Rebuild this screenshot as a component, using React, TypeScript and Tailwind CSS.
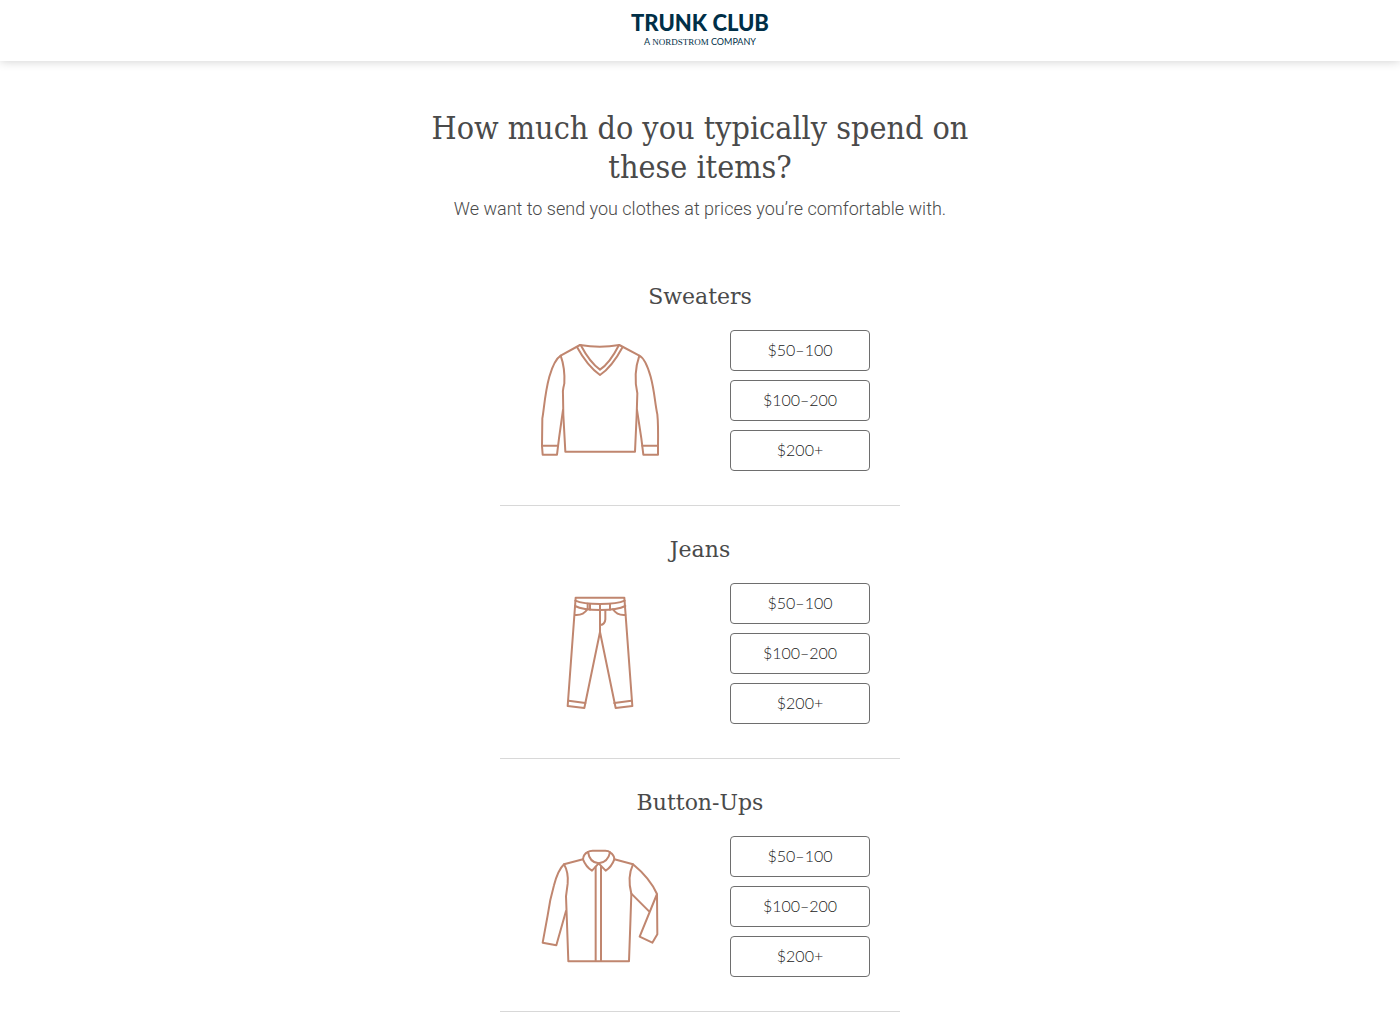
import type { ReactNode } from "react";

const PRICES = ["$50–100", "$100–200", "$200+"];

function Drawing({ label, viewBox, children }: { label: string; viewBox: string; children: ReactNode }) {
  return (
    <svg
      role="img"
      aria-label={label}
      viewBox={viewBox}
      className="h-[130px] w-[140px]"
      fill="none"
      stroke="#c0866f"
      strokeWidth="6"
      strokeLinejoin="round"
      strokeLinecap="round"
    >
      {children}
    </svg>
  );
}

function Sweater() {
  return (
    <Drawing label="Sweater" viewBox="0 3 420 390">
      <path d="M150 30Q210 40 268 30L328 62Q346 70 362 125C374 170 374 200 382 238Q385 265 384 333V359H340L334 310L321 225" />
      <path d="M150 30L92 62Q73 74 58 125C44 176 42 225 37 250L36 333L38 359H81L87 310L99 225" />
      <path d="M92 62C105 98 104 125 103 145C99 165 97 165 99 180L100 240L106 350H315L320 240L322 175C313 135 315 100 328 62" />
      <path d="M141 36Q172 93 210 120Q245 97 278 36M152 30Q180 83 210 104Q239 85 267 30" />
      <path d="M37 332H84M337 332H384" />
    </Drawing>
  );
}

function Jeans() {
  return (
    <Drawing label="Jeans" viewBox="0 3 420 390">
      <path d="M137 29H283L307 354L257 360L210 132L163 360L113 354Z" />
      <path d="M136 38Q158 48 210 48Q263 48 284 38M135 54Q158 66 210 66Q263 66 286 54" />
      <path d="M173 47V64M180 48V65M240 48V65M210 49V132M226 67V94Q225 109 211 111" />
      <path d="M172 64Q160 83 135 81M249 64Q261 83 286 81" />
      <path d="M116 338L166 345M304 338L253 345" />
    </Drawing>
  );
}

function Shirt() {
  return (
    <Drawing label="Button-up shirt" viewBox="0 5 420 390">
      <path d="M174 35Q178 31 188 31H226Q236 31 240 36Q253 44 253 57Q245 79 227 91L206 69L186 91Q168 80 159 57Q160 41 174 35Z" />
      <path d="M174 35Q179 67 206 69Q234 66 240 36" />
      <path d="M159 57L102 72Q84 89 72 135Q59 180 53 225L38 307L79 315L108 212" />
      <path d="M102 72Q116 96 113 130L108 168L111 250L115 363H297L301 250L304 160Q291 110 309 72L253 57" />
      <path d="M309 72Q359 113 381 161L382 282L367 307L329 289L381 161M304 160L358 214" />
      <path d="M197 79V361M213 79V361" />
    </Drawing>
  );
}

const ITEMS = [
  { name: "Sweaters", drawing: <Sweater /> },
  { name: "Jeans", drawing: <Jeans /> },
  { name: "Button-Ups", drawing: <Shirt /> },
];

export default function App() {
  return (
    <div className="min-h-screen bg-white font-['Lato',sans-serif] text-[#4a4a4a]">
      <header className="flex h-[61px] justify-center bg-white pt-[11px] shadow-[0_0_10px_rgba(0,0,0,0.2)]">
        <a href="#" className="flex flex-col items-center text-[#002f47]">
          <span className="text-[22px] leading-6 font-black">TRUNK CLUB</span>
          <span className="text-[9px] leading-[13px]">
            A <span className="font-['Liberation_Serif',serif]">NORDSTROM</span> COMPANY
          </span>
        </a>
      </header>

      <main className="mx-auto max-w-[600px] pt-12">
        <div className="text-center">
          <h1 className="font-['DejaVu_Serif_Condensed','DejaVu_Serif',serif] text-[32px] leading-[39px]">
            How much do you typically spend on
            <br />
            these items?
          </h1>
          <p className="mt-2 font-['Roboto',sans-serif] text-[18px] leading-7 font-light">
            We want to send you clothes at prices you’re comfortable with.
          </p>
        </div>

        <div className="mx-auto mt-[30px] max-w-[400px]">
          {ITEMS.map((item) => (
            <section key={item.name} className="border-b border-[#d8d8d8] pt-[26px] pb-[34px]">
              <h2 className="text-center font-['DejaVu_Serif',serif] text-[22px] leading-9">{item.name}</h2>
              <div className="mt-[15px] grid grid-cols-2 items-center justify-items-center">
                {item.drawing}
                <div className="flex w-[140px] flex-col gap-[9px]">
                  {PRICES.map((price) => (
                    <button
                      key={price}
                      type="button"
                      className="h-[41px] rounded border border-[#6e6e6e] bg-white pb-0.5 text-[16px] font-light text-[#222222]"
                    >
                      {price}
                    </button>
                  ))}
                </div>
              </div>
            </section>
          ))}
        </div>
      </main>
    </div>
  );
}
